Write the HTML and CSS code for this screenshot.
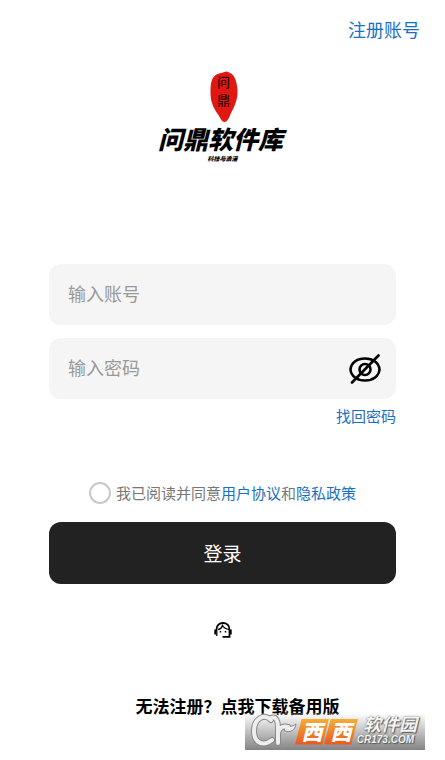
FILE: index.html
```
<!DOCTYPE html>
<html lang="zh-CN">
<head>
    <meta charset="UTF-8">
    <meta name="viewport" content="width=device-width, initial-scale=1">
    <title>问鼎软件库 - 登录</title>
    <link rel="stylesheet" href="styles.css">
</head>
<body>
    <header class="topbar">
        <a href="#register">注册账号</a>
    </header>

    <main class="container">
        <div class="brand">
            <div class="seal">
                <svg class="seal-shape" viewBox="0 0 28 52" aria-hidden="true">
                    <path d="M16 .5C18 .5 19 1.500 21 2.500C25 5 27 11 27.500 19C28 27 25 35 21.500 41C19.500 45 18 51 14.500 51C11.500 51 10 46 7 42C3 36 .5 30 .5 22C.5 14 1 8 5 4.500C8 2 12 2 16 .5Z" fill="#e01812"/>
                </svg>
                <span class="seal-text">问鼎</span>
            </div>
            <h1>问鼎软件库</h1>
            <p class="slogan">科技与浪漫</p>
        </div>

        <form class="login-form">
            <div class="field">
                <input type="text" name="username" placeholder="输入账号" aria-label="输入账号">
            </div>
            <div class="field">
                <input type="password" name="password" placeholder="输入密码" aria-label="输入密码">
                <button type="button" class="eye" aria-label="显示密码">
                    <svg viewBox="0 0 32 30" fill="none" stroke="#000" stroke-width="2.600" stroke-linecap="round">
                        <path d="M1.500 15.500C2 9 8 4.500 16 4.500S30 9 30.500 15.500C30 22 24 26.500 16 26.500S2 22 1.500 15.500Z"/>
                        <circle cx="16" cy="15.500" r="5.500"/>
                        <path d="M3 28.500L29.500 1.500"/>
                    </svg>
                </button>
            </div>
            <a class="find" href="#password">找回密码</a>

            <div class="agree">
                <input type="checkbox" id="agree">
                <label for="agree">我已阅读并同意<a href="#terms">用户协议</a>和<a href="#privacy">隐私政策</a></label>
            </div>

            <button type="submit" class="submit">登录</button>
        </form>

        <a class="service" href="#service" aria-label="客服">
            <svg viewBox="0 0 18 16" fill="none" stroke="#000" stroke-width="1.800">
                <path d="M2.500 9V7.500C2.500 3.500 5.300 1 9 1S15.500 3.500 15.500 7.500V14.800H8.500"/>
                <path d="M1.300 7.500V12.500M16.700 7.500V12.500" stroke-width="2"/>
                <path d="M2.800 14V9M4 7.500C6.500 7 8 5.500 8.500 3.500C10 6 12 7.300 15 7.300" stroke-width="1.300"/>
                <path d="M6.500 9V10.500M11.500 9V10.500" stroke-width="1.500"/>
            </svg>
        </a>

        <a class="backup" href="#backup">无法注册？点我下载备用版</a>
    </main>

    <div class="watermark">
        <svg class="mark" viewBox="0 0 52 37" aria-hidden="true">
            <g fill="none" stroke-linecap="round" stroke-linejoin="round">
                <path class="mark-edge" d="M26 7C20 0 9 5 9 18C9 30 18 34 27 27M26 5C31 3 33 8 33 14V30M33 20C35 13 39 13 43 14"/>
                <path class="mark-leaf" d="M39 12C44 15 48 13 51 11C50 17 46 20 40 18Z"/>
                <path class="mark-line" d="M26 7C20 0 9 5 9 18C9 30 18 34 27 27M26 5C31 3 33 8 33 14V30M33 20C35 13 39 13 43 14"/>
            </g>
        </svg>
        <div class="tiles">
            <span class="tile">西</span>
            <span class="tile">西</span>
        </div>
        <div class="site">
            <span class="site-name">软件园</span>
            <span class="site-url">CR173.COM</span>
        </div>
    </div>
</body>
</html>
```

FILE: styles.css
```
* {
    box-sizing: border-box;
}
body {
    margin: 0;
    background-color: #fff;
    color: #000;
    font-family: "Noto Sans CJK SC", sans-serif;
    font-size: 15px;
    line-height: 20px;
}
a {
    color: #1a6fc0;
    text-decoration: none;
}
button {
    border: 0;
    padding: 0;
    font-family: inherit;
    cursor: pointer;
}
svg {
    display: block;
}
.topbar {
    display: flex;
    justify-content: flex-end;
    padding: 15px 25px 0;
    font-size: 18px;
    line-height: 28px;
}
.container {
    display: flex;
    flex-direction: column;
    align-items: center;
    padding: 28px 49px 0;
}

/* logo */
.brand {
    display: flex;
    flex-direction: column;
    align-items: center;
    height: 193px;
}
.seal {
    position: relative;
    width: 28px;
    margin-left: 3px;
}
.seal-text {
    position: absolute;
    top: 2px;
    left: 7px;
    width: 13px;
    font-size: 13px;
    font-weight: 500;
    line-height: 18px;
    color: #300;
}
h1 {
    margin: 0;
    padding-right: 4px;
    font-size: 25px;
    font-style: italic;
    font-weight: 900;
    line-height: 31px;
}
.slogan {
    margin: 1px 0 0;
    font-size: 6px;
    font-style: italic;
    font-weight: 900;
    line-height: 8px;
}

/* form */
.login-form {
    display: flex;
    flex-direction: column;
    gap: 13px;
    width: 100%;
}
.field {
    display: flex;
    align-items: center;
    height: 61px;
    padding: 0 15px 0 19px;
    border-radius: 12px;
    background-color: #f5f5f5;
}
.field input {
    flex: 1;
    min-width: 0;
    padding: 0 0 4px;
    border: 0;
    outline: 0;
    background: none;
    font-family: inherit;
    font-size: 18px;
}
.field input::placeholder {
    color: #999;
}
.eye {
    width: 32px;
    background: none;
}
.find {
    align-self: flex-end;
    margin-top: -6px;
}
.agree {
    display: flex;
    align-items: center;
    justify-content: center;
    gap: 5px;
    margin: 43px 0 5px;
    color: #777;
}
.agree input {
    appearance: none;
    width: 22px;
    height: 22px;
    margin: 0;
    border: 2px solid #c8c8cc;
    border-radius: 50%;
}
.submit {
    height: 62px;
    padding-bottom: 2px;
    border-radius: 12px;
    background-color: #222;
    color: #fff;
    font-size: 19px;
}
.service {
    width: 18px;
    margin-top: 38px;
}
.backup {
    margin: 55px 0 0 30px;
    color: #000;
    font-size: 17px;
    font-weight: 700;
    line-height: 26px;
    white-space: nowrap;
}

/* site watermark over the bottom corner */
.watermark {
    position: absolute;
    top: 713px;
    right: 20px;
    display: flex;
    align-items: center;
    width: 180px;
    height: 37px;
    background: linear-gradient(rgba(255, 255, 255, 0.2), rgba(125, 125, 125, 0.95));
}
.mark {
    width: 52px;
}
.mark-edge {
    stroke: #888;
    stroke-width: 6px;
}
.mark-line {
    stroke: #eee;
    stroke-width: 4px;
}
.mark-leaf {
    fill: #eee;
    stroke: #888;
}
.tiles {
    display: flex;
    margin-left: -2px;
}
.tile {
    width: 34px;
    height: 26px;
    margin-right: -5px;
    background: linear-gradient(#f6ad32, #e9571f);
    clip-path: polygon(20% 0, 100% 0, 80% 100%, 0 100%);
    color: #fff;
    font-size: 21px;
    font-style: italic;
    font-weight: 900;
    line-height: 24px;
    text-align: center;
}
.site {
    display: flex;
    flex-direction: column;
    align-items: flex-end;
    flex: 1;
    padding: 0 8px 3px 0;
    color: #f4f4f4;
    font-style: italic;
    font-weight: 700;
    text-shadow: 0 0 1px #555, 1px 1px 1px #555;
    white-space: nowrap;
}
.site-name {
    font-size: 18px;
    line-height: 20px;
}
.site-url {
    padding-right: 3px;
    font-family: "Liberation Sans", sans-serif;
    font-size: 10px;
    line-height: 14px;
}
```
